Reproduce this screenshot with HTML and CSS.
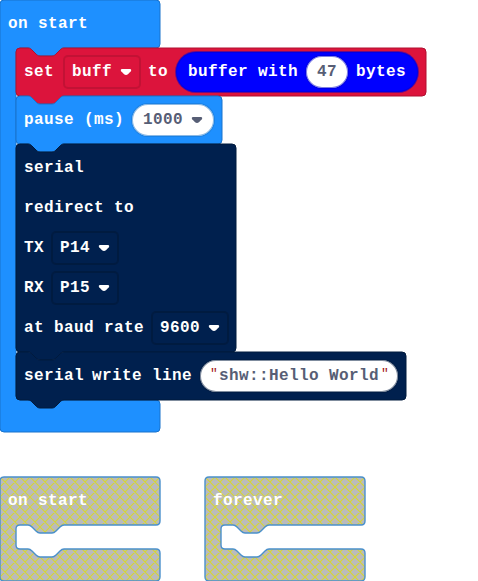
FILE: index.html
```
<!DOCTYPE html>
<html lang="en">
<head>
<meta charset="utf-8">
<title>Blocks</title>
<link rel="stylesheet" href="styles.css">
</head>
<body>
<svg class="defs" width="0" height="0" aria-hidden="true">
  <defs>
    <pattern id="disabled" patternUnits="userSpaceOnUse" width="10" height="10">
      <rect width="10" height="10" fill="#aaa"/>
      <path d="M0 0L10 10M10 0L0 10M-1 1L1 -1M9 11L11 9M-1 9L1 11M9 -1L11 1" stroke="#cc0" stroke-width="1.1"/>
    </pattern>
    <symbol id="arrow" viewBox="0 0 12 12">
      <path d="M2 3H10C11.200 3 11.600 4.300 10.800 5.200L8.200 8Q6 9.800 3.800 8L1.200 5.200C.4 4.300.8 3 2 3Z" fill="currentColor"/>
    </symbol>
    <path id="empty-hat" d="M0 4Q0 0 4 0H156Q160 0 160 4V44Q160 48 156 48H64C62 48 61 49 60 50L56 54C55 55 54 56 52 56H40C38 56 37 55 36 54L32 50C31 49 30 48 28 48H20Q16 48 16 52V68Q16 72 20 72H28C30 72 31 73 32 74L36 78C37 79 38 80 40 80H52C54 80 55 79 56 78L60 74C61 73 62 72 64 72H156Q160 72 160 76V100Q160 104 156 104H4Q0 104 0 100Z"/>
  </defs>
</svg>
<main class="workspace">
  <section class="event start">
    <svg class="shape" width="160" height="432"><path d="M0 4Q0 0 4 0H156Q160 0 160 4V44Q160 48 156 48H64C62 48 61 49 60 50L56 54C55 55 54 56 52 56H40C38 56 37 55 36 54L32 50C31 49 30 48 28 48H20Q16 48 16 52V396Q16 400 20 400H156Q160 400 160 404V428Q160 432 156 432H4Q0 432 0 428Z"/></svg>
    <div class="row"><span>on start</span></div>
    <div class="stack">
      <div class="block red set">
        <svg class="shape" width="410" height="48"><path d="M0 4Q0 0 4 0H12C14 0 15 1 16 2L20 6C21 7 22 8 24 8H36C38 8 39 7 40 6L44 2C45 1 46 0 48 0H406Q410 0 410 4V44Q410 48 406 48H48C46 48 45 49 44 50L40 54C39 55 38 56 36 56H24C22 56 21 55 20 54L16 50C15 49 14 48 12 48H4Q0 48 0 44Z"/></svg>
        <div class="row">
          <span class="name">set</span>
          <div class="field">buff<svg class="arrow"><use href="#arrow"/></svg></div>
          <span>to</span>
          <div class="reporter"><span>buffer with</span><div class="value">47</div><span>bytes</span></div>
        </div>
      </div>
      <div class="block blue pause">
        <svg class="shape" width="206" height="48"><path d="M0 4Q0 0 4 0H12C14 0 15 1 16 2L20 6C21 7 22 8 24 8H36C38 8 39 7 40 6L44 2C45 1 46 0 48 0H202Q206 0 206 4V44Q206 48 202 48H48C46 48 45 49 44 50L40 54C39 55 38 56 36 56H24C22 56 21 55 20 54L16 50C15 49 14 48 12 48H4Q0 48 0 44Z"/></svg>
        <div class="row"><span>pause (ms)</span><div class="value">1000<svg class="arrow"><use href="#arrow"/></svg></div></div>
      </div>
      <div class="block navy redirect">
        <svg class="shape" width="220" height="208"><path d="M0 4Q0 0 4 0H12C14 0 15 1 16 2L20 6C21 7 22 8 24 8H36C38 8 39 7 40 6L44 2C45 1 46 0 48 0H216Q220 0 220 4V204Q220 208 216 208H48C46 208 45 209 44 210L40 214C39 215 38 216 36 216H24C22 216 21 215 20 214L16 210C15 209 14 208 12 208H4Q0 208 0 204Z"/></svg>
        <div class="row"><span>serial</span></div>
        <div class="row"><span>redirect to</span></div>
        <div class="row"><span>TX</span><div class="field">P14<svg class="arrow"><use href="#arrow"/></svg></div></div>
        <div class="row"><span>RX</span><div class="field">P15<svg class="arrow"><use href="#arrow"/></svg></div></div>
        <div class="row"><span>at baud rate</span><div class="field">9600<svg class="arrow"><use href="#arrow"/></svg></div></div>
      </div>
      <div class="block navy write">
        <svg class="shape" width="390" height="48"><path d="M0 4Q0 0 4 0H12C14 0 15 1 16 2L20 6C21 7 22 8 24 8H36C38 8 39 7 40 6L44 2C45 1 46 0 48 0H386Q390 0 390 4V44Q390 48 386 48H48C46 48 45 49 44 50L40 54C39 55 38 56 36 56H24C22 56 21 55 20 54L16 50C15 49 14 48 12 48H4Q0 48 0 44Z"/></svg>
        <div class="row"><span>serial</span><span>write line</span><div class="value text"><span class="quote">"</span><span>shw::Hello World</span><span class="quote">"</span></div></div>
      </div>
    </div>
  </section>
  <div class="unused">
    <section class="event disabled">
      <svg class="shape" width="160" height="104"><use href="#empty-hat"/></svg>
      <div class="row"><span>on start</span></div>
    </section>
    <section class="event disabled">
      <svg class="shape" width="160" height="104"><use href="#empty-hat"/></svg>
      <div class="row"><span>forever</span></div>
    </section>
  </div>
</main>
</body>
</html>
```
FILE: styles.css
```
* { box-sizing: border-box; }
body {
  margin: 0;
  background: #fff;
  overflow: hidden;
  font: bold 16px/20px "Liberation Mono", monospace;
  letter-spacing: 0.398px;
  color: #fff;
}
.defs { position: absolute; }
.workspace { width: 478px; height: 581px; }
.event, .block { position: relative; }
.shape {
  position: absolute;
  left: 0;
  top: 0;
  overflow: visible;
  fill: #1e90ff;
  stroke: #1873cc;
  stroke-width: 1;
}
.red > .shape { fill: #dc143c; stroke: #b01030; }
.navy > .shape { fill: #00204e; stroke: #001a3d; }
.disabled > .shape {
  fill: url(#disabled);
  fill-opacity: 0.8;
  stroke: #4a90cc;
  stroke-width: 1.4;
}
.start { width: 160px; height: 432px; }
.stack { margin-left: 16px; }
.set { width: 410px; }
.pause { width: 206px; }
.redirect { width: 220px; padding: 4px 0; }
.write { width: 390px; }
.row {
  position: relative;
  display: flex;
  align-items: center;
  gap: 8px;
  height: 48px;
  padding-left: 8px;
  white-space: pre;
}
.redirect .row { height: 40px; }
.name { width: 32px; }
.field, .value, .reporter {
  --edge: rgb(24 115 204 / 50%);
  display: flex;
  align-items: center;
  gap: 8px;
  box-shadow: 0 0 0 1px var(--edge), inset 0 0 0 1px var(--edge);
}
.field, .value {
  height: 32px;
  padding: 0 8px;
  border-radius: 4px;
}
.red .field { --edge: rgb(176 16 48 / 60%); }
.navy .field { --edge: rgb(0 26 61 / 80%); }
.navy .value { --edge: rgb(0 26 61 / 50%); }
.value {
  padding: 0 11px;
  border-radius: 16px;
  background: #fff;
  color: #575e75;
}
.arrow { width: 12px; height: 12px; }
.reporter, .reporter .value { --edge: rgb(0 0 204 / 50%); }
.reporter {
  height: 40px;
  padding: 0 12px;
  border-radius: 20px;
  background: #00f;
}
.text { gap: 0; padding: 0 8px; }
.value .quote {
  width: 11px;
  padding-left: 1px;
  text-align: center;
  font-size: 13px;
  color: #a31515;
  font-weight: normal;
  margin-top: -4px;
}
.unused {
  display: flex;
  gap: 45px;
  margin-top: 45px;
}
.disabled { width: 160px; height: 104px; }
```
